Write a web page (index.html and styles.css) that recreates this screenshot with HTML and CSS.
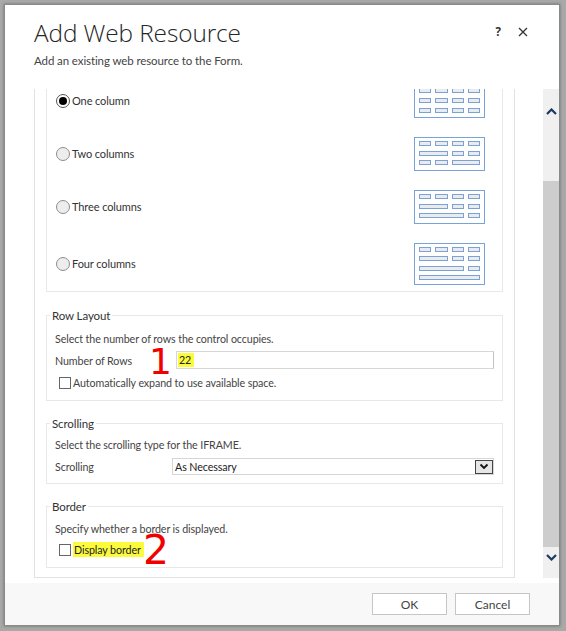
FILE: index.html
```html
<!DOCTYPE html>
<html lang="en">
<head>
<meta charset="utf-8">
<title>Add Web Resource</title>
<link rel="stylesheet" href="styles.css">
</head>
<body>
<div class="dialog">
  <header class="dlg-head">
    <div class="titles">
      <h1 class="title">Add Web Resource</h1>
      <p class="subtitle">Add an existing web resource to the Form.</p>
    </div>
    <div class="actions">
      <span class="help">?</span>
      <svg class="close" width="10" height="10" viewBox="0 0 10 10"><path d="M1 1L9 9M9 1L1 9" stroke="#333" stroke-width="1.3" fill="none"/></svg>
    </div>
  </header>

  <div class="viewport">
    <div class="scroll-content">
      <div class="outer">
        <fieldset class="group group-cols">
          <div class="col-row">
            <label class="radio-label"><span class="radio checked"></span>One column</label>
            <svg class="layout-icon" width="71" height="34" viewBox="0 0 71 34">
              <rect class="box" x="0.5" y="0.5" width="70" height="33"/>
              <rect class="cell" x="5.5" y="4.5" width="11" height="4"/><rect class="cell" x="21.5" y="4.5" width="12" height="4"/><rect class="cell" x="38.5" y="4.5" width="11" height="4"/><rect class="cell" x="54.5" y="4.5" width="11" height="4"/>
              <rect class="cell" x="5.5" y="14.5" width="11" height="4"/><rect class="cell" x="21.5" y="14.5" width="12" height="4"/><rect class="cell" x="38.5" y="14.5" width="11" height="4"/><rect class="cell" x="54.5" y="14.5" width="11" height="4"/>
              <rect class="cell" x="5.5" y="24.5" width="11" height="4"/><rect class="cell" x="21.5" y="24.5" width="12" height="4"/><rect class="cell" x="38.5" y="24.5" width="11" height="4"/><rect class="cell" x="54.5" y="24.5" width="11" height="4"/>
            </svg>
          </div>
          <div class="col-row">
            <label class="radio-label"><span class="radio"></span>Two columns</label>
            <svg class="layout-icon" width="71" height="34" viewBox="0 0 71 34">
              <rect class="box" x="0.5" y="0.5" width="70" height="33"/>
              <rect class="cell" x="5.5" y="4.5" width="11" height="4"/><rect class="cell" x="21.5" y="4.5" width="12" height="4"/><rect class="cell" x="38.5" y="4.5" width="11" height="4"/><rect class="cell" x="54.5" y="4.5" width="11" height="4"/>
              <rect class="cell" x="5.5" y="14.5" width="28" height="4"/><rect class="cell" x="38.5" y="14.5" width="11" height="4"/><rect class="cell" x="54.5" y="14.5" width="11" height="4"/>
              <rect class="cell" x="5.5" y="23.5" width="11" height="4"/><rect class="cell" x="21.5" y="23.5" width="12" height="4"/><rect class="cell" x="38.5" y="23.5" width="27" height="4"/>
            </svg>
          </div>
          <div class="col-row">
            <label class="radio-label"><span class="radio"></span>Three columns</label>
            <svg class="layout-icon" width="71" height="34" viewBox="0 0 71 34">
              <rect class="box" x="0.5" y="0.5" width="70" height="33"/>
              <rect class="cell" x="5.5" y="4.5" width="11" height="4"/><rect class="cell" x="21.5" y="4.5" width="12" height="4"/><rect class="cell" x="38.5" y="4.5" width="11" height="4"/><rect class="cell" x="54.5" y="4.5" width="11" height="4"/>
              <rect class="cell" x="5.5" y="14.5" width="28" height="4"/><rect class="cell" x="38.5" y="14.5" width="11" height="4"/><rect class="cell" x="54.5" y="14.5" width="11" height="4"/>
              <rect class="cell" x="5.5" y="23.5" width="44" height="4"/><rect class="cell" x="54.5" y="23.5" width="11" height="4"/>
            </svg>
          </div>
          <div class="col-row col-row-tall">
            <label class="radio-label"><span class="radio"></span>Four columns</label>
            <svg class="layout-icon" width="71" height="42" viewBox="0 0 71 42">
              <rect class="box" x="0.5" y="0.5" width="70" height="41"/>
              <rect class="cell" x="5.5" y="4.5" width="11" height="4"/><rect class="cell" x="21.5" y="4.5" width="12" height="4"/><rect class="cell" x="38.5" y="4.5" width="11" height="4"/><rect class="cell" x="54.5" y="4.5" width="11" height="4"/>
              <rect class="cell" x="5.5" y="13.5" width="28" height="4"/><rect class="cell" x="38.5" y="13.5" width="11" height="4"/><rect class="cell" x="54.5" y="13.5" width="11" height="4"/>
              <rect class="cell" x="5.5" y="23.5" width="44" height="4"/><rect class="cell" x="54.5" y="23.5" width="11" height="4"/>
              <rect class="cell" x="5.5" y="32.5" width="60" height="4"/>
            </svg>
          </div>
        </fieldset>

        <fieldset class="group group-rows">
          <legend>Row Layout</legend>
          <div class="group-body">
            <p class="desc">Select the number of rows the control occupies.</p>
            <div class="field-row rows-row">
              <span class="field-label label-rows">Number of Rows</span>
              <div class="text-input"><span class="hl">22</span></div>
              <span class="marker marker-1">1</span>
            </div>
            <div class="check-row check-row-auto">
              <span class="checkbox"></span><span class="check-label">Automatically expand to use available space.</span>
            </div>
          </div>
        </fieldset>

        <fieldset class="group group-scroll">
          <legend>Scrolling</legend>
          <div class="group-body">
            <p class="desc">Select the scrolling type for the IFRAME.</p>
            <div class="field-row select-row">
              <span class="field-label label-scroll">Scrolling</span>
              <div class="select">
                <span class="select-value">As Necessary</span>
                <span class="select-btn"><svg width="10" height="7" viewBox="0 0 10 7"><path d="M1.5 1.5L5 5L8.5 1.5" stroke="#111" stroke-width="1.8" fill="none"/></svg></span>
              </div>
            </div>
          </div>
        </fieldset>

        <fieldset class="group group-border">
          <legend>Border</legend>
          <div class="group-body">
            <p class="desc">Specify whether a border is displayed.</p>
            <div class="check-row check-row-border">
              <span class="checkbox"></span><span class="check-label hl hl-label">Display border</span>
              <span class="marker marker-2">2</span>
            </div>
          </div>
        </fieldset>
      </div>
    </div>

    <div class="scrollbar">
      <div class="sb-up"><svg width="11" height="7" viewBox="0 0 11 7"><path d="M1 6L5.5 1.5L10 6" stroke="#1d3a60" stroke-width="2.2" fill="none"/></svg></div>
      <div class="sb-track"><div class="sb-thumb"></div></div>
      <div class="sb-down"><svg width="11" height="7" viewBox="0 0 11 7"><path d="M1 1L5.5 5.5L10 1" stroke="#1d3a60" stroke-width="2.2" fill="none"/></svg></div>
    </div>
  </div>

  <footer class="dlg-foot">
    <button class="btn">OK</button>
    <button class="btn">Cancel</button>
  </footer>
</div>
</body>
</html>
```

FILE: styles.css
```css
html, body {
  margin: 0;
  padding: 0;
}
body {
  width: 566px;
  height: 631px;
  overflow: hidden;
  background: #a9a9a9;
  font-family: "Lato", "Liberation Sans", sans-serif;
  font-size: 10.7px;
  letter-spacing: -0.1px;
  color: #444;
}
.dialog {
  margin: 4px 0 0 4px;
  width: 554px;
  height: 620px;
  border: 1px solid #8a8a8a;
  background: #fff;
  box-shadow: 0 0 3px rgba(0,0,0,0.35);
  display: flex;
  flex-direction: column;
}

/* header */
.dlg-head {
  height: 84px;
  box-sizing: border-box;
  padding: 13px 31px 0 29px;
  display: flex;
  justify-content: space-between;
  align-items: flex-start;
  flex: none;
}
.title {
  margin: 0;
  font-family: "Open Sans", "Lato", sans-serif;
  font-weight: 300;
  font-size: 24.4px;
  line-height: 30px;
  color: #262626;
  letter-spacing: -0.1px;
}
.subtitle {
  margin: 6px 0 0;
  font-size: 11.5px;
  line-height: 14px;
  color: #444;
}
.actions {
  display: flex;
  align-items: center;
  height: 10px;
  margin-top: 9px;
  gap: 17px;
}
.help {
  font-family: "Open Sans", sans-serif;
  font-weight: 700;
  font-size: 11.5px;
  line-height: 10px;
  color: #333;
}
.close { display: block; }

/* scroll viewport */
.viewport {
  height: 489px;
  flex: none;
  display: flex;
}
.scroll-content {
  flex: 1;
  overflow: hidden;
  display: flex;
  flex-direction: column;
  justify-content: flex-end;
}
.outer {
  margin-left: 29px;
  width: 481px;
  box-sizing: border-box;
  border: 1px solid #e2e2e2;
  padding: 0 11px 9px;
  flex: none;
}
.group {
  margin: 0;
  padding: 9px 0 10px;
  border: 1px solid #e8e8e8;
  min-width: 0;
}
.group legend {
  margin-left: 3px;
  padding: 2px 2px 0;
  line-height: 14px;
  font-size: 11.5px;
  color: #333;
}
.group-rows, .group-scroll, .group-border { margin-top: 14px; }
.group-rows { margin-top: 15px; }
.group-body { padding: 0 8px; }

/* column layout */
.group-cols {
  padding: 0 17px 6px 9px;
  display: flex;
  flex-direction: column;
  gap: 19px;
}
.col-row {
  height: 34px;
  display: flex;
  align-items: center;
  justify-content: space-between;
}
.col-row-tall { height: 42px; }
.radio-label {
  display: flex;
  align-items: center;
  color: #333;
  line-height: 14px;
  font-size: 11px;
}
.radio {
  width: 12px;
  height: 12px;
  border: 1px solid #8d8d8d;
  border-radius: 50%;
  background: #ededed;
  margin-right: 2px;
  display: flex;
  align-items: center;
  justify-content: center;
}
.radio.checked { border-color: #555; background: #fff; }
.radio.checked::after {
  content: "";
  width: 8px;
  height: 8px;
  border-radius: 50%;
  background: #000;
}
.layout-icon { display: block; }
.layout-icon .box { fill: #fff; stroke: #79a3d8; stroke-width: 1; }
.layout-icon .cell { fill: #ebebeb; stroke: #79a3d8; stroke-width: 1; }

/* fields */
.desc {
  margin: 0;
  line-height: 14px;
}
.field-row {
  position: relative;
  display: flex;
  align-items: center;
}
.rows-row { margin-top: 5px; height: 18px; }
.field-label { flex: none; }
.label-rows { width: 121px; }
.label-scroll { width: 117px; }
.text-input {
  flex: 1;
  height: 18px;
  box-sizing: border-box;
  border: 1px solid #d6d6d6;
  border-right-color: #c2c2c2;
  padding: 1px 1px;
  display: flex;
  align-items: center;
}
.hl {
  background: #fbfb3c;
  color: #222;
  padding: 0 3px 0 1px;
  line-height: 14px;
}
.check-row {
  position: relative;
  display: flex;
  align-items: center;
  padding-left: 4px;
}
.check-row-auto { margin-top: 7px; height: 14px; }
.check-row-border { margin-top: 6px; height: 15px; }
.checkbox {
  width: 10px;
  height: 10px;
  border: 1px solid #666;
  background: #fff;
  margin-right: 2px;
  flex: none;
}
.check-label { line-height: 14px; }
.hl-label { line-height: 15px; padding: 0 3px 0 1px; }

.select-row { margin-top: 6px; height: 17px; }
.select {
  flex: 1;
  height: 17px;
  box-sizing: border-box;
  border: 1px solid #d6d6d6;
  display: flex;
  align-items: center;
  padding-left: 2px;
  color: #222;
}
.select-btn {
  margin-left: auto;
  width: 18px;
  height: 14px;
  box-sizing: border-box;
  border: 1px solid #444;
  background: #e6e6e6;
  display: flex;
  align-items: center;
  justify-content: center;
}
.select-btn svg { display: block; }
.group-scroll { padding-top: 7px; padding-bottom: 8px; }
.group-border { padding-top: 8px; }

/* annotations */
.marker {
  position: absolute;
  font-family: "DejaVu Sans", sans-serif;
  color: #f20000;
  letter-spacing: 0;
}
.marker-1 { font-size: 36px; line-height: 27px; left: 94px; top: -3px; }
.marker-2 { font-size: 41px; line-height: 29px; left: 88px; top: -6px; }

/* scrollbar */
.scrollbar {
  width: 16px;
  flex: none;
  background: #f0f0f0;
  display: flex;
  flex-direction: column;
}
.sb-up {
  height: 44px;
  display: flex;
  align-items: center;
  justify-content: center;
}
.sb-track {
  flex: 1;
  display: flex;
  flex-direction: column;
  justify-content: flex-end;
}
.sb-thumb { height: 366px; background: #cdcdcd; }
.sb-down {
  height: 31px;
  box-sizing: border-box;
  padding-top: 7px;
  display: flex;
  justify-content: center;
  align-items: flex-start;
}
.sb-up svg, .sb-down svg { display: block; }

/* footer */
.dlg-foot {
  margin-top: 5px;
  height: 42px;
  box-sizing: border-box;
  background: #f8f8f8;
  display: flex;
  justify-content: flex-end;
  align-items: flex-start;
  gap: 8px;
  padding: 10px 29px 0 0;
  flex: none;
}
.btn {
  width: 75px;
  height: 22px;
  border: 1px solid #c6c6c6;
  background: #fff;
  font-family: "Lato", sans-serif;
  font-size: 12px;
  color: #444;
  padding: 0;
}
```
